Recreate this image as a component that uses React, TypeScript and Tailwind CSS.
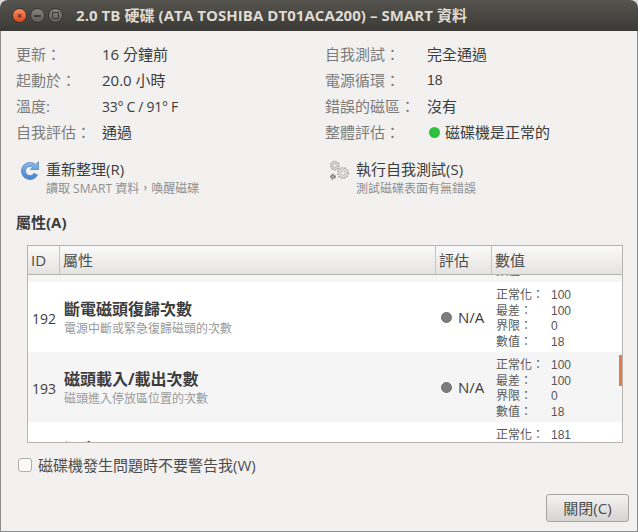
const FONT = "font-['Open_Sans','Noto_Sans_CJK_TC',sans-serif]";

const INFO_LEFT = [
  ['更新：', '16 分鐘前', ''],
  ['起動於：', '20.0 小時', ''],
  ['溫度:', '33° C / 91° F', 'text-[14px] tracking-[-0.3px]'],
  ['自我評估：', '通過', ''],
];

const INFO_RIGHT = [
  ['自我測試：', '完全通過', ''],
  ['電源循環：', '18', "font-['Liberation_Sans'] text-[14px]"],
  ['錯誤的磁區：', '沒有', ''],
];

type Attr = {
  id: string;
  name: string;
  desc: string;
  values: string[];
};

const ROWS: Attr[] = [
  { id: '192', name: '斷電磁頭復歸次數', desc: '電源中斷或緊急復歸磁頭的次數', values: ['100', '100', '0', '18'] },
  { id: '193', name: '磁頭載入/載出次數', desc: '磁頭進入停放區位置的次數', values: ['100', '100', '0', '18'] },
];

const VALUE_LABELS = ['正常化：', '最差：', '界限：', '數值：'];

function RefreshIcon() {
  return (
    <svg width="20" height="20" viewBox="0 0 20 20" className="shrink-0">
      <defs>
        <linearGradient id="blueArrow" x1="0" y1="0" x2="0" y2="1">
          <stop offset="0" stopColor="#8fbce8" />
          <stop offset="1" stopColor="#3f82cf" />
        </linearGradient>
      </defs>
      <path
        d="M10 1.5C5.2 1.5 1.5 5.2 1.5 10s3.7 8.5 8.5 8.5c3.3 0 6-1.7 7.5-4.5l-3.6-1.8c-.8 1.5-2.2 2.4-3.9 2.4-2.5 0-4.5-2-4.5-4.6s2-4.6 4.5-4.6c1 0 1.9.3 2.6.9L10.4 8.5h8.1V.8l-2.8 2.6C14.2 2.2 12.2 1.5 10 1.5z"
        fill="url(#blueArrow)"
        stroke="#4a7fb8"
        strokeWidth="0.7"
      />
    </svg>
  );
}

function Gear({ cx, cy, r, fill, line }: { cx: number; cy: number; r: number; fill: string; line: string }) {
  return (
    <g>
      <circle cx={cx} cy={cy} r={r} fill={fill} stroke={line} strokeWidth="1.5" strokeDasharray="1.6 1.2" />
      <circle cx={cx} cy={cy} r={r * 0.42} fill="#f2f1f0" stroke={line} strokeWidth="0.6" />
    </g>
  );
}

function GearsIcon() {
  return (
    <svg width="20" height="22" viewBox="0 0 20 22" className="shrink-0">
      <Gear cx={4.8} cy={5.6} r={4.2} fill="#d4d4d2" line="#a8a8a6" />
      <Gear cx={13} cy={13} r={5.2} fill="#dcdcda" line="#a4a4a2" />
      <Gear cx={2.9} cy={16.6} r={2.2} fill="#9a9a98" line="#7c7c7a" />
    </svg>
  );
}

function WindowButton({ tone, children }: { tone: string; children?: React.ReactNode }) {
  return (
    <div className={`flex h-[15px] w-[15px] items-center justify-center rounded-full border border-[#35342f] ${tone}`}>
      {children}
    </div>
  );
}

function Action({ icon, title, sub }: { icon: React.ReactNode; title: string; sub: string }) {
  return (
    <div className="flex items-start">
      <div className="flex h-[24px] w-[26px] items-center">{icon}</div>
      <div className="flex flex-col">
        <span className="h-[20px] text-[15px] leading-[20px] text-[#3c3c3c]">{title}</span>
        <span className="mt-[1px] h-[18px] text-[12px] leading-[18px] text-[#8f8f8f]">{sub}</span>
      </div>
    </div>
  );
}

function HeaderCell({ className, children }: { className: string; children: React.ReactNode }) {
  return (
    <div className={`flex h-full items-center border-r border-[#c4c3c0] pl-[3px] text-[15px] text-[#4c4c4c] ${className}`}>
      {children}
    </div>
  );
}

function ValueList({ values }: { values: string[] }) {
  return (
    <div className="flex flex-col pt-[5px]">
      {VALUE_LABELS.map((label, i) => (
        <div key={label} className="flex h-[15.7px] items-center text-[12px]">
          <span className="w-[55px] text-[#5a5a5a]">{label}</span>
          <span className="font-['Liberation_Sans'] text-[#555]">{values[i]}</span>
        </div>
      ))}
    </div>
  );
}

function AttrRow({ row, alt }: { row: Attr; alt: boolean }) {
  return (
    <div className={`flex h-[70px] shrink-0 ${alt ? 'bg-[#f5f5f5]' : 'bg-white'}`}>
      <div className="flex w-[32px] items-center justify-end pr-[4px] pt-[2px] text-[14px] text-[#3c3c3c]">{row.id}</div>
      <div className="flex w-[376px] flex-col pl-[4px] pt-[16px]">
        <span className="h-[22px] text-[16px] leading-[22px] font-bold text-[#3c3c3c]">{row.name}</span>
        <span className="mt-[2px] h-[14px] text-[12px] leading-[14px] text-[#9a9a9a]">{row.desc}</span>
      </div>
      <div className="flex w-[60px] items-center pl-[5px]">
        <span className="h-[11px] w-[11px] rounded-full border border-[#6f6f6f] bg-[#7d7d7d]" />
        <span className="ml-[6px] text-[15px] text-[#3c3c3c]">N/A</span>
      </div>
      <ValueList values={row.values} />
    </div>
  );
}

export default function App() {
  return (
    <div className={`flex h-[532px] w-[638px] flex-col overflow-hidden bg-[#d9d9d9] ${FONT}`}>
      <div className="flex h-[31px] shrink-0 items-center rounded-t-[8px] bg-gradient-to-b from-[#56544e] to-[#3b3a36] pl-[12px]">
        <div className="flex gap-[3px]">
          <WindowButton tone="bg-gradient-to-b from-[#f58a5c] to-[#d9481c]">
            <span className="text-[9px] leading-none font-bold text-[#5a2410]">×</span>
          </WindowButton>
          <WindowButton tone="bg-gradient-to-b from-[#86847d] to-[#5f5d57]">
            <span className="h-[2px] w-[7px] bg-[#3c3b37]" />
          </WindowButton>
          <WindowButton tone="bg-gradient-to-b from-[#86847d] to-[#5f5d57]">
            <span className="h-[7px] w-[7px] border border-[#3c3b37]" />
          </WindowButton>
        </div>
        <span className="ml-[13px] text-[15px] font-bold tracking-[0.06px] whitespace-nowrap text-[#dfdbd2]">
          2.0 TB 硬碟 (ATA TOSHIBA DT01ACA200) – SMART 資料
        </span>
      </div>

      <div className="flex min-h-0 flex-1 flex-col border-x border-b border-[#8c8c8c] bg-[#f2f1f0] pl-[15px] pr-[8px]">
        <div className="mt-[10px] grid grid-cols-[309px_1fr]">
          <div className="flex flex-col">
            {INFO_LEFT.map(([label, value, extra]) => (
              <div key={label} className="flex h-[26px] items-center text-[15px]">
                <span className="w-[86px] text-[#7c7c7c]">{label}</span>
                <span className={`text-[#3c3c3c] ${extra}`}>{value}</span>
              </div>
            ))}
          </div>
          <div className="flex flex-col">
            {INFO_RIGHT.map(([label, value, extra]) => (
              <div key={label} className="flex h-[26px] items-center text-[15px]">
                <span className="w-[102px] text-[#7c7c7c]">{label}</span>
                <span className={`text-[#3c3c3c] ${extra}`}>{value}</span>
              </div>
            ))}
            <div className="flex h-[26px] items-center text-[15px]">
              <span className="w-[104px] text-[#7c7c7c]">整體評估：</span>
              <span className="mr-[5px] h-[11px] w-[11px] rounded-full bg-[#2fc03f]" />
              <span className="text-[#3c3c3c]">磁碟機是正常的</span>
            </div>
          </div>
        </div>

        <div className="mt-[14px] grid grid-cols-[309px_1fr] pl-[4px]">
          <Action icon={<RefreshIcon />} title="重新整理(R)" sub="讀取 SMART 資料，喚醒磁碟" />
          <div className="pl-[1px]">
            <Action icon={<GearsIcon />} title="執行自我測試(S)" sub="測試磁碟表面有無錯誤" />
          </div>
        </div>

        <div className="mt-[14px] h-[20px] text-[15px] leading-[20px] font-bold text-[#3c3c3c]">屬性(A)</div>

        <div className="relative mt-[13px] ml-[11px] flex h-[198px] w-[596px] flex-col overflow-hidden border border-[#b5b4b1] bg-white">
          <div className="flex h-[29px] shrink-0 items-center border-b border-[#b5b4b1] bg-gradient-to-b from-[#fafafa] to-[#e4e3e1]">
            <HeaderCell className="w-[32px]">ID</HeaderCell>
            <HeaderCell className="w-[376px]">屬性</HeaderCell>
            <HeaderCell className="w-[56px]">評估</HeaderCell>
            <div className="pl-[3px] text-[15px] text-[#4c4c4c]">數值</div>
          </div>

          {/* the list is scrolled: tail of the row above, head of the row below */}
          <div className="flex h-[7px] shrink-0 items-start overflow-hidden bg-[#f5f5f5] pl-[468px]">
            <span className="-mt-[12px] h-[16px] shrink-0 text-[12px] leading-[16px] text-[#5a5a5a]">數值：</span>
          </div>
          {ROWS.map((row, i) => (
            <AttrRow key={row.id} row={row} alt={i === 1} />
          ))}
          <div className="flex h-[20px] shrink-0 overflow-hidden bg-white">
            <div className="w-[408px] pl-[36px] pt-[16px]">
              <span className="block h-[22px] text-[16px] leading-[22px] font-bold text-[#3c3c3c]">溫度</span>
            </div>
            <div className="flex h-[20px] items-start pl-[60px] pt-[5px] text-[12px] leading-[16px]">
              <span className="w-[55px] text-[#5a5a5a]">正常化：</span>
              <span className="font-['Liberation_Sans'] text-[#555]">181</span>
            </div>
          </div>
          <div className="absolute top-[109px] right-0 h-[31px] w-[3px] bg-[#e57a4c]" />
        </div>

        <div className="mt-[14px] flex h-[16px] items-center pl-[2px]">
          <span className="h-[14px] w-[14px] rounded-[3px] border border-[#b0afac] bg-[#fafafa]" />
          <span className="ml-[6px] text-[15px] text-[#4c4c4c]">磁碟機發生問題時不要警告我(W)</span>
        </div>

        <div className="mt-[21px] flex justify-end">
          <button className="h-[28px] w-[83px] rounded-[3px] border border-[#a5a4a1] bg-gradient-to-b from-[#f4f3f2] to-[#d6d5d3] text-[15px] text-[#4c4c4c]">
            關閉(C)
          </button>
        </div>
      </div>
    </div>
  );
}
